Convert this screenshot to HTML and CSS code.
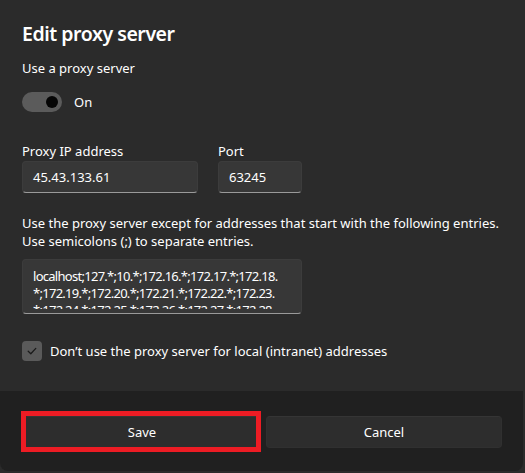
FILE: index.html
```html
<!DOCTYPE html>
<html lang="en">
<head>
<meta charset="utf-8">
<title>Edit proxy server</title>
<link rel="stylesheet" href="styles.css">
</head>
<body>
<div class="dialog">
  <div class="content">
    <h1 class="title">Edit proxy server</h1>
    <div class="label">Use a proxy server</div>
    <div class="toggle-row">
      <span class="toggle"><span class="knob"></span></span>
      <span class="toggle-text">On</span>
    </div>
    <div class="fields">
      <div class="field field-ip">
        <div class="field-label">Proxy IP address</div>
        <div class="input">45.43.133.61</div>
      </div>
      <div class="field field-port">
        <div class="field-label">Port</div>
        <div class="input">63245</div>
      </div>
    </div>
    <p class="hint">Use the proxy server except for addresses that start with the following entries. Use semicolons (;) to separate entries.</p>
    <div class="textarea">
      <div class="textarea-inner">localhost;127.*;10.*;172.16.*;172.17.*;172.18.<br>*;172.19.*;172.20.*;172.21.*;172.22.*;172.23.<br>*;172.24.*;172.25.*;172.26.*;172.27.*;172.28.</div>
    </div>
    <div class="check-row">
      <span class="checkbox">
        <svg width="12" height="12" viewBox="0 0 12 12"><path d="M2.2 6.3 L4.8 8.8 L9.8 3.4" fill="none" stroke="#1a1a1a" stroke-width="1.3" stroke-linecap="round" stroke-linejoin="round"/></svg>
      </span>
      <span class="check-text">Don’t use the proxy server for local (intranet) addresses</span>
    </div>
  </div>
  <div class="footer">
    <div class="btn btn-save">Save<span class="highlight"></span></div>
    <div class="btn">Cancel</div>
  </div>
</div>
</body>
</html>
```

FILE: styles.css
```css
html, body {
  margin: 0;
  padding: 0;
  background: #2b2b2b;
}
body {
  font-family: "Noto Sans", "Open Sans", sans-serif;
  color: #ffffff;
  font-size: 13px;
}
.dialog {
  width: 523px;
  height: 471px;
  display: flex;
  flex-direction: column;
  border-radius: 0 0 8px 8px;
  overflow: hidden;
  background: #2b2b2b;
}
.content {
  flex: 1;
  padding: 20px 22px 0;
  box-sizing: border-box;
}
.title {
  margin: 0;
  font-size: 19.5px;
  font-weight: 600;
  letter-spacing: -0.45px;
  line-height: 28px;
}
.label {
  margin-top: 10px;
  line-height: 20px;
  font-size: 13px;
}
.toggle-row {
  margin-top: 14px;
  height: 20px;
  display: flex;
  align-items: center;
  gap: 12px;
}
.toggle {
  width: 40px;
  height: 20px;
  border-radius: 10px;
  background: #5b5b5b;
  display: flex;
  align-items: center;
  justify-content: flex-end;
  padding-right: 4px;
  box-sizing: border-box;
}
.knob {
  width: 12px;
  height: 12px;
  border-radius: 50%;
  background: #050505;
}
.toggle-text {
  line-height: 20px;
}
.fields {
  margin-top: 29px;
  display: flex;
  gap: 20px;
}
.field-ip { width: 176px; }
.field-port { width: 84px; }
.field-label {
  line-height: 20px;
}
.input {
  height: 32px;
  box-sizing: border-box;
  background: #373737;
  border: 1px solid #3c3c3c;
  border-bottom-color: #9a9a9a;
  border-radius: 4px;
  padding: 0 10px;
  display: flex;
  align-items: center;
  line-height: 20px;
}
.hint {
  margin: 22px 0 0;
  line-height: 17.5px;
  font-size: 13px;
}
.textarea {
  margin-top: 9px;
  width: 280px;
  height: 55px;
  box-sizing: border-box;
  background: #373737;
  border: 1px solid #3c3c3c;
  border-bottom-color: #9a9a9a;
  border-radius: 4px;
  padding: 7.5px 6px 0 10px;
}
.textarea-inner {
  height: 41px;
  overflow: hidden;
  line-height: 17px;
  white-space: nowrap;
  letter-spacing: -0.72px;
}
.check-row {
  margin-top: 27px;
  display: flex;
  align-items: center;
  gap: 8px;
  height: 20px;
}
.checkbox {
  width: 20px;
  height: 20px;
  border-radius: 4px;
  background: #5a5a5a;
  display: flex;
  align-items: center;
  justify-content: center;
}
.checkbox svg { display: block; }
.footer {
  height: 80px;
  background: #202020;
  box-sizing: border-box;
  padding: 25px 21px 0 24px;
  display: grid;
  grid-template-columns: 236px 236px;
  gap: 6px;
  align-content: start;
}
.btn {
  position: relative;
  height: 32px;
  box-sizing: border-box;
  background: #2d2d2d;
  border: 1px solid #303030;
  border-top-color: #353535;
  border-radius: 4px;
  display: flex;
  align-items: center;
  justify-content: center;
  font-size: 13px;
}
.highlight {
  position: absolute;
  left: -4px;
  top: -6px;
  width: 240px;
  height: 41px;
  box-sizing: border-box;
  border: 5px solid #ed1c24;
}
```
